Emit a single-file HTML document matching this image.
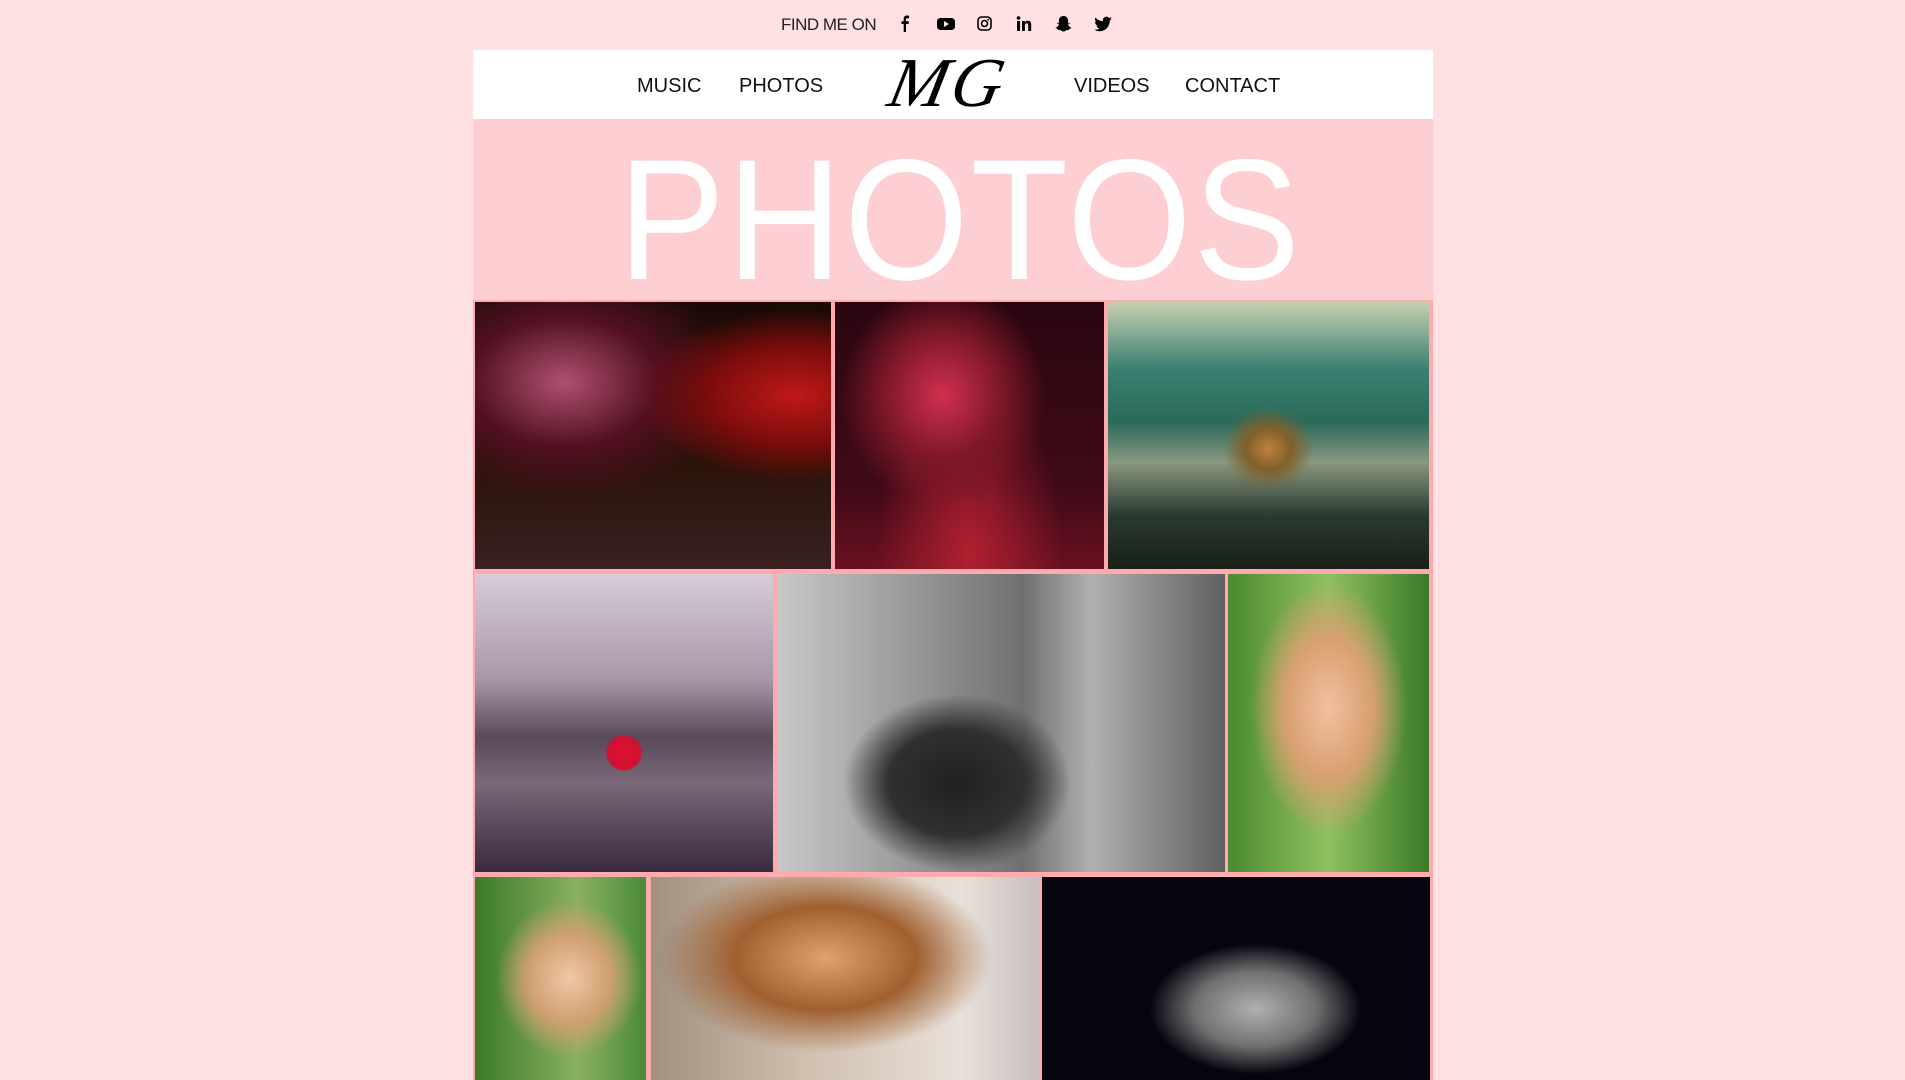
<!DOCTYPE html>
<html><head><meta charset="utf-8"><style>
*{margin:0;padding:0;box-sizing:border-box}
body{width:1905px;height:1080px;background:#ffe0e3;position:relative;overflow:hidden;font-family:"Liberation Sans",sans-serif}
.a{position:absolute}
.nav{color:#111;font-size:20px;top:75px}
.img{position:absolute;overflow:hidden}
</style></head><body>
<div class="a" style="left:781px;top:15px;font-size:17px;color:#222;letter-spacing:-0.5px">FIND ME ON</div>
<svg class="a" style="left:894px;top:14px" width="220" height="20" viewBox="0 0 220 20">
<path d="M12 18V10h2.5l.4-2.8H12V5.5c0-.8.3-1.3 1.4-1.3H15V1.7C14.6 1.6 13.8 1.5 13 1.5c-2 0-3.3 1.2-3.3 3.4v2.3H7.5V10h2.2v8z" fill="#000"/>
<rect x="43" y="4" width="18" height="12" rx="3.5" fill="#000"/><path d="M50 7v6l5-3z" fill="#ffe0e3"/>
<rect x="84" y="3" width="13" height="13" rx="3.5" fill="none" stroke="#000" stroke-width="1.6"/><circle cx="90.5" cy="9.5" r="3" fill="none" stroke="#000" stroke-width="1.6"/><circle cx="94.2" cy="5.8" r=".9" fill="#000"/>
<rect x="123" y="7" width="3" height="10" fill="#000"/><circle cx="124.5" cy="4" r="1.8" fill="#000"/><path d="M128 7h2.8v1.4c.6-1 1.7-1.7 3.2-1.7 2.5 0 3.2 1.6 3.2 4V17h-3v-5.6c0-1.300-.3-2.2-1.5-2.2s-1.8.9-1.8 2.3V17H128z" fill="#000"/>
<path d="M169.5 2c3 0 4.6 2.3 4.6 4.8v2.4l1.7-.5c.4 0 .5.5.1.7l-1.8.8c.4 1.8 2 3.2 3.4 3.6.1.6-1.4.9-2.2 1.1l-.4 1.2-1.8-.2c-1 .2-2 1.6-3.600 1.6s-2.6-1.4-3.6-1.6l-1.8.2-.4-1.2c-.8-.2-2.3-.5-2.2-1.1 1.4-.4 3-1.8 3.4-3.6l-1.8-.8c-.4-.2-.3-.7.1-.7l1.7.5V6.8c0-2.5 1.6-4.8 4.6-4.8z" fill="#000"/>
<path d="M218 4.5c-.7.3-1.4.5-2.1.6.8-.5 1.3-1.2 1.6-2-.7.4-1.5.7-2.3.9a3.6 3.6 0 0 0-6.2 3.3c-3-.2-5.7-1.600-7.5-3.8-1 1.7-.5 3.8 1.1 4.8-.6 0-1.1-.2-1.6-.4 0 1.8 1.2 3.3 2.9 3.6-.5.2-1.1.2-1.6.1.5 1.5 1.9 2.5 3.4 2.5A7.3 7.3 0 0 1 200 15.6c1.6 1 3.5 1.6 5.5 1.6 6.7 0 10.4-5.6 10.2-10.6.8-.6 1.4-1.2 1.9-2z" fill="#000"/>
</svg>
<div class="a" style="left:473px;top:50px;width:960px;height:69px;background:#fff"></div>
<div class="a nav" style="left:637px">MUSIC</div>
<div class="a nav" style="left:739px">PHOTOS</div>
<div class="a nav" style="left:1074px">VIDEOS</div>
<div class="a nav" style="left:1185px">CONTACT</div>
<div class="a" style="left:890px;top:44px;font-family:'Liberation Serif',serif;font-style:italic;font-size:70px;color:#000;letter-spacing:4px;transform:skewX(-12deg)">MG</div>
<div class="a" style="left:473px;top:119px;width:960px;height:181px;background:#fdcfd3"></div>
<div class="a" style="left:593px;top:120px;width:720px;text-align:center;color:#fff;font-size:172px;line-height:200px;transform:scaleX(0.93);transform-origin:center;letter-spacing:2px">PHOTOS</div>
<div class="a" style="left:473px;top:300px;width:960px;height:780px;background:#ffaaaf"></div>
<div class="img" style="left:475px;top:302px;width:356px;height:267px;background:radial-gradient(ellipse at 90% 35%,#c01818 0,#7a0c0c 20%,transparent 35%),radial-gradient(ellipse at 25% 30%,#b05070 0,#501020 25%,transparent 45%),linear-gradient(180deg,#1a0a06 0%,#2a1208 60%,#3a2020 100%)"></div>
<div class="img" style="left:835px;top:302px;width:269px;height:267px;background:radial-gradient(ellipse at 40% 35%,#d03050 0,#801828 25%,transparent 45%),radial-gradient(ellipse at 50% 95%,#b02030 0,transparent 50%),linear-gradient(180deg,#2a0610,#400a18 70%,#6a1020)"></div>
<div class="img" style="left:1108px;top:302px;width:321px;height:267px;background:radial-gradient(ellipse at 50% 55%,#c08040 0,#80602a 10%,transparent 20%),linear-gradient(180deg,#c8d0b0 0%,#3a8070 25%,#2a6a5a 45%,#8a9880 60%,#2a3a30 80%,#1a2018 100%)"></div>
<div class="img" style="left:475px;top:574px;width:298px;height:298px;background:radial-gradient(circle at 50% 60%,#e01030 0,#d01030 7%,transparent 8%),linear-gradient(180deg,#d8ccd8 0%,#a898a8 35%,#5a4a58 55%,#7a6878 70%,#3a2a40 100%)"></div>
<div class="img" style="left:778px;top:574px;width:447px;height:298px;background:radial-gradient(ellipse at 40% 70%,#202020 0,#303030 18%,transparent 30%),linear-gradient(90deg,#c8c8c8 0%,#a0a0a0 25%,#707070 55%,#b0b0b0 70%,#606060 100%)"></div>
<div class="img" style="left:1228px;top:574px;width:201px;height:298px;background:radial-gradient(ellipse at 50% 45%,#f0c0a0 0,#d8a070 30%,transparent 55%),linear-gradient(90deg,#4a8a30,#90c060 50%,#3a7a28)"></div>
<div class="img" style="left:475px;top:877px;width:171px;height:203px;background:radial-gradient(ellipse at 55% 50%,#f0c8a8 0,#d0a070 30%,transparent 55%),linear-gradient(90deg,#3a7a2a,#8ab060 60%,#4a8a3a)"></div>
<div class="img" style="left:651px;top:877px;width:388px;height:203px;background:radial-gradient(ellipse at 45% 40%,#e0a070 0,#a06030 30%,transparent 55%),linear-gradient(90deg,#a09080,#d0c0b0 40%,#e8e0d8 80%,#c8c0c0)"></div>
<div class="img" style="left:1042px;top:877px;width:388px;height:203px;background:radial-gradient(ellipse at 55% 65%,#b0b0b0 0,#707070 20%,transparent 35%),#050510"></div>
</body></html>
